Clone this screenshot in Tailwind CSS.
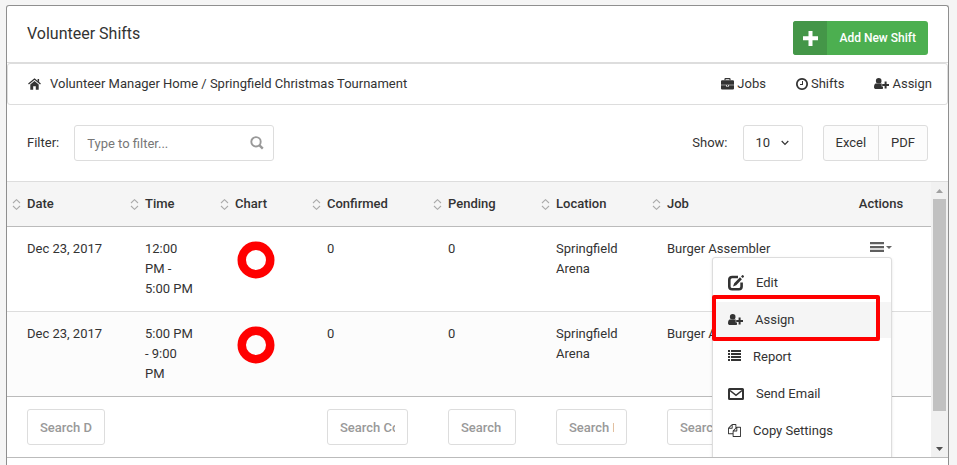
<!DOCTYPE html>
<html lang="en">
<head>
<meta charset="utf-8">
<meta name="viewport" content="width=device-width, initial-scale=1">
<title>Volunteer Shifts</title>
<script src="https://cdn.jsdelivr.net/npm/@tailwindcss/browser@4"></script>
</head>
<body class="bg-[#f5f5f5] font-['Roboto',sans-serif] text-[13px] leading-5 text-[#333]">
<svg class="hidden">
  <symbol id="user-plus" viewBox="0 0 15 13">
    <circle cx="4.700" cy="2.900" r="2.800"/>
    <path d="M2.200 5.200C.7 5.500 0 7 0 9.200 0 10.400.8 11 2 11h5.600c.6 0 1.100-.2 1.400-.6V8.400H7.700V5.700c-.2-.2-.4-.400-.7-.5-1.200 1.200-3.500 1.200-4.800 0z"/>
    <path d="M10.600 3.600h2v2.500H15v2h-2.400v2.500h-2V8.100H8.200v-2h2.400z"/>
  </symbol>
  <symbol id="sort" viewBox="0 0 9 11">
    <path d="M1 4 4.500.7 8 4M1 7 4.500 10.300 8 7" fill="none" stroke="#aaa" stroke-width="1.100"/>
  </symbol>
  <symbol id="ring" viewBox="0 0 42 42">
    <circle cx="21" cy="21" r="14.250" fill="none" stroke="#f00" stroke-width="8.500"/>
  </symbol>
</svg>

<div class="flex min-h-screen flex-col pt-[5px] pr-2 pl-[6px]">
<main class="flex-1 rounded-t-[3px] border border-b-0 border-[#8f8f8f] bg-white">

  <header class="flex h-[57px] items-center justify-between border-b border-[#ddd] pr-5 pl-5">
    <h1 class="text-[16px] leading-6">Volunteer Shifts</h1>
    <button type="button" class="mt-2 flex h-[34px] items-center overflow-hidden rounded-[3px] bg-[#4caf50] text-[12px] font-medium text-white">
      <span class="flex h-full w-[34px] items-center justify-center bg-[#449648]">
        <svg class="size-[15px]" viewBox="0 0 15 15" fill="#fff"><path d="M5.500 0h4v5.300H15v4H9.500V15h-4V9.300H0v-4h5.500z"/></svg>
      </span>
      <span class="px-3">Add New Shift</span>
    </button>
  </header>

  <div class="flex h-[42px] items-center justify-between rounded-[3px] border border-[#ddd] pr-[15px] pl-5">
    <nav aria-label="Breadcrumb" class="flex items-center">
      <svg class="mr-[9px] h-3 w-[13px]" viewBox="0 0 13 12" fill="#333">
        <path d="M.500 6.100 6.500 1l6 5.100" fill="none" stroke="#333" stroke-width="1.300"/>
        <path d="M9.600 1h1.500v3.400L9.600 3.100z"/>
        <path d="M2.300 6.400 6.500 2.900l4.200 3.500v5.400H7.800V8.200H5.200v3.600H2.300z"/>
      </svg>
      <a href="#home">Volunteer Manager Home</a><span class="whitespace-pre"> / </span><span>Springfield Christmas Tournament</span>
    </nav>
    <nav aria-label="Sections" class="flex items-center gap-[30px]">
      <a href="#jobs" class="flex items-center gap-[3px]">
        <svg class="h-[13px] w-[13px]" viewBox="0 0 13 13" fill="#333">
          <path d="M4 2.300V1.200q0-.500.500-.5h4q.500 0 .500.500v1.100" fill="none" stroke="#333" stroke-width="1.200"/>
          <path d="M1.100 2.200h10.800q1.100 0 1.100 1.100v3.400H0V3.300q0-1.100 1.100-1.100z"/>
          <path d="M0 7.300h5v1.300h3V7.300h5v3.200q0 1-1.100 1H1.100q-1.100 0-1.100-1z"/>
          <path d="M5.800 7h1.400v.9H5.800z"/>
        </svg>Jobs</a>
      <a href="#shifts" class="flex items-center gap-[3px]">
        <svg class="size-[12px]" viewBox="128 128 1536 1536" fill="#333"><path d="M1024 544v448q0 14-9 23t-23 9h-320q-14 0-23-9t-9-23v-64q0-14 9-23t23-9h224v-352q0-14 9-23t23-9h64q14 0 23 9t9 23zm416 352q0-148-73-273t-198-198-273-73-273 73-198 198-73 273 73 273 198 198 273 73 273-73 198-198 73-273zm224 0q0 209-103 385.500t-279.500 279.500-385.500 103-385.500-103-279.500-279.500-103-385.500 103-385.500 279.500-279.500 385.500-103 385.500 103 279.500 279.500 103 385.500z"/></svg>Shifts</a>
      <a href="#assign" class="flex items-center gap-[3px]">
        <svg class="h-[13px] w-[15px]" fill="#333"><use href="#user-plus"/></svg>Assign</a>
    </nav>
  </div>

  <div class="flex h-[76px] items-center justify-between px-5">
    <div class="flex items-center">
      <label for="filter" class="mr-[15px]">Filter:</label>
      <div class="relative">
        <input id="filter" type="text" placeholder="Type to filter..." class="h-9 w-[200px] rounded-[3px] border border-[#ddd] bg-white pr-8 pl-3 placeholder:text-[#777]">
        <svg class="absolute top-[11px] right-[10px] size-[14px]" viewBox="0 0 14 14" fill="none" stroke="#999"><circle cx="6" cy="5.800" r="4.700" stroke-width="1.900"/><path d="M9.500 9.300 12.800 12.600" stroke-width="2.400"/></svg>
      </div>
    </div>
    <div class="flex items-center">
      <label for="show" class="mr-[15px]">Show:</label>
      <div class="relative">
        <select id="show" class="h-9 w-[60px] appearance-none rounded-[3px] border border-[#ddd] bg-white pl-3"><option>10</option><option>25</option><option>50</option></select>
        <svg class="pointer-events-none absolute top-[15px] right-[14px] h-[6px] w-2" viewBox="0 0 8 6" fill="none" stroke="#333" stroke-width="1.200"><path d="M.7 1 4 4.300 7.300 1"/></svg>
      </div>
      <div class="ml-5 flex h-9 divide-x divide-[#ddd] overflow-hidden rounded-[3px] border border-[#ddd] bg-[#fcfcfc]">
        <button type="button" class="px-3">Excel</button>
        <button type="button" class="px-3">PDF</button>
      </div>
    </div>
  </div>

  <div class="relative flex overflow-hidden border-t border-b border-t-[#ddd] border-b-[#bbb]">
    <table class="w-full min-w-0 flex-1 table-fixed border-separate border-spacing-0">
      <colgroup>
        <col class="w-[118px]"><col class="w-[90px]"><col class="w-[92px]"><col class="w-[121px]"><col class="w-[108px]"><col class="w-[111px]"><col><col class="w-[100px]">
      </colgroup>
      <thead class="bg-[#f5f5f5] text-left">
        <tr>
          <th class="relative border-b border-[#bbb] px-5 py-3 font-medium"><svg class="absolute top-[17px] left-[5px] h-[11px] w-[9px]"><use href="#sort"/></svg>Date</th>
          <th class="relative border-b border-[#bbb] px-5 py-3 font-medium"><svg class="absolute top-[17px] left-[5px] h-[11px] w-[9px]"><use href="#sort"/></svg>Time</th>
          <th class="relative border-b border-[#bbb] px-5 py-3 font-medium"><svg class="absolute top-[17px] left-[5px] h-[11px] w-[9px]"><use href="#sort"/></svg>Chart</th>
          <th class="relative border-b border-[#bbb] px-5 py-3 font-medium"><svg class="absolute top-[17px] left-[5px] h-[11px] w-[9px]"><use href="#sort"/></svg>Confirmed</th>
          <th class="relative border-b border-[#bbb] px-5 py-3 font-medium"><svg class="absolute top-[17px] left-[5px] h-[11px] w-[9px]"><use href="#sort"/></svg>Pending</th>
          <th class="relative border-b border-[#bbb] px-5 py-3 font-medium"><svg class="absolute top-[17px] left-[5px] h-[11px] w-[9px]"><use href="#sort"/></svg>Location</th>
          <th class="relative border-b border-[#bbb] px-5 py-3 font-medium"><svg class="absolute top-[17px] left-[5px] h-[11px] w-[9px]"><use href="#sort"/></svg>Job</th>
          <th class="border-b border-[#bbb] px-5 py-3 text-center font-medium">Actions</th>
        </tr>
      </thead>
      <tbody class="align-top">
        <tr>
          <td class="border-b border-[#ddd] px-5 py-3">Dec 23, 2017</td>
          <td class="border-b border-[#ddd] px-5 py-3">12:00 PM - 5:00 PM</td>
          <td class="border-b border-[#ddd] px-5 py-3"><svg class="size-[42px]"><use href="#ring"/></svg></td>
          <td class="border-b border-[#ddd] px-5 py-3">0</td>
          <td class="border-b border-[#ddd] px-5 py-3">0</td>
          <td class="border-b border-[#ddd] px-5 py-3">Springfield Arena</td>
          <td class="border-b border-[#ddd] px-5 py-3">Burger Assembler</td>
          <td class="relative border-b border-[#ddd] px-5 py-3">
            <button type="button" aria-label="Row actions" class="mx-auto flex h-4 items-center gap-[2px]">
              <svg class="h-[10px] w-[14px]" viewBox="0 0 14 10" fill="#5f5f5f"><path d="M0 0h14v2.300H0zM0 3.900h14v2.300H0zM0 7.700h14v2.300H0z"/></svg>
              <svg class="h-[3px] w-[6px]" viewBox="0 0 6 3" fill="#666"><path d="M0 0h6L3 3z"/></svg>
            </button>
            <ul class="absolute top-[30px] right-[39px] z-10 flex h-[240px] w-[180px] flex-col gap-px rounded-[3px] border border-[#ddd] bg-white py-[7px] shadow-sm">
              <li><a href="#edit" class="flex h-9 items-center gap-3 px-[15px]">
                <svg class="size-4" viewBox="0 0 16 16"><path d="M10 2H4.200Q1.300 2 1.300 4.800v6.600q0 2.800 2.900 2.800h6.600q2.800 0 2.800-2.800V7.500" fill="none" stroke="#333" stroke-width="2.600"/><path d="M12 2.300 13.900 4.200 8.200 10.300 5 11.500 6.200 8.200zM13 1.400 14.200.3q.5-.4 1 0l.6.700q.4.500 0 .9l-1.100 1.200z" fill="#333"/></svg>Edit</a></li>
              <li class="relative"><a href="#assign-shift" class="flex h-9 items-center gap-3 bg-[#f5f5f5] px-[15px]">
                <svg class="h-[13px] w-[15px]" fill="#333"><use href="#user-plus"/></svg>Assign</a>
                <div class="pointer-events-none absolute -top-[7px] -left-px h-[46px] w-[168px] rounded-[2px] border-4 border-[#f00]"></div></li>
              <li><a href="#report" class="flex h-9 items-center gap-3 px-[15px]">
                <svg class="h-[14px] w-[13px]" viewBox="0 0 13 14" fill="#333"><path d="M0 0h2v2H0zM3 0h10v2H3zM0 3h2v2H0zM3 3h10v2H3zM0 6h2v2H0zM3 6h10v2H3zM0 9h2v2H0zM3 9h10v2H3z"/></svg>Report</a></li>
              <li><a href="#email" class="flex h-9 items-center gap-3 px-[15px]">
                <svg class="h-3 w-4" viewBox="0 0 16 12" fill="none" stroke="#333" stroke-width="2"><rect x="1" y="1" width="14" height="10" rx=".5"/><path d="M2 2.500 8 7.300 14 2.500" stroke-width="1.600"/></svg>Send Email</a></li>
              <li><a href="#copy" class="flex h-9 items-center gap-3 px-[15px]">
                <svg class="h-[15px] w-[13px]" viewBox="0 0 1792 2068" fill="#333"><path d="M1696 384q40 0 68 28t28 68v1216q0 40-28 68t-68 28h-960q-40 0-68-28t-28-68v-288h-544q-40 0-68-28t-28-68v-672q0-40 20-88t48-76l408-408q28-28 76-48t88-20h416q40 0 68 28t28 68v328q68-40 128-40h416zm-544 213l-299 299h299v-299zm-640-384l-299 299h299v-299zm196 647l316-316v-416h-384v416q0 40-28 68t-68 28h-416v640h512v-256q0-40 20-88t48-76zm956 804v-1152h-384v416q0 40-28 68t-68 28h-416v640h896z"/></svg>Copy Settings</a></li>
            </ul>
          </td>
        </tr>
        <tr class="bg-[#fcfcfc]">
          <td class="px-5 py-3">Dec 23, 2017</td>
          <td class="px-5 py-3">5:00 PM - 9:00 PM</td>
          <td class="px-5 py-3"><svg class="size-[42px]"><use href="#ring"/></svg></td>
          <td class="px-5 py-3">0</td>
          <td class="px-5 py-3">0</td>
          <td class="px-5 py-3">Springfield Arena</td>
          <td class="px-5 py-3">Burger Assembler</td>
          <td class="px-5 py-3"></td>
        </tr>
      </tbody>
      <tfoot>
        <tr>
          <td class="border-t border-[#bbb] px-5 py-3"><input type="text" aria-label="Search Date" placeholder="Search Date" class="block h-9 w-full rounded-[3px] border border-[#ddd] px-3 font-medium placeholder:text-[#999]"></td>
          <td class="border-t border-[#bbb]"></td>
          <td class="border-t border-[#bbb]"></td>
          <td class="border-t border-[#bbb] px-5 py-3"><input type="text" aria-label="Search Confirmed" placeholder="Search Confirmed" class="block h-9 w-full rounded-[3px] border border-[#ddd] px-3 font-medium placeholder:text-[#999]"></td>
          <td class="border-t border-[#bbb] px-5 py-3"><input type="text" aria-label="Search Pending" placeholder="Search Pending" class="block h-9 w-full rounded-[3px] border border-[#ddd] px-3 font-medium placeholder:text-[#999]"></td>
          <td class="border-t border-[#bbb] px-5 py-3"><input type="text" aria-label="Search Location" placeholder="Search Location" class="block h-9 w-full rounded-[3px] border border-[#ddd] px-3 font-medium placeholder:text-[#999]"></td>
          <td class="border-t border-[#bbb] px-5 py-3"><input type="text" aria-label="Search Job" placeholder="Search Job" class="block h-9 w-full rounded-[3px] border border-[#ddd] px-3 font-medium placeholder:text-[#999]"></td>
          <td class="border-t border-[#bbb]"></td>
        </tr>
      </tfoot>
    </table>
    <div class="flex w-[17px] shrink-0 flex-col items-center bg-[#f1f1f1]">
      <div class="flex h-[17px] items-center"><svg class="h-1 w-[7px]" viewBox="0 0 7 4" fill="#a0a0a0"><path d="M3.500 0 7 4H0z"/></svg></div>
      <div class="mb-[29px] w-[13px] flex-1 bg-[#c1c1c1]"></div>
      <div class="flex h-[17px] items-center"><svg class="h-1 w-[7px]" viewBox="0 0 7 4" fill="#505050"><path d="M0 0h7L3.500 4z"/></svg></div>
    </div>
  </div>
</main>
</div>
</body>
</html>
